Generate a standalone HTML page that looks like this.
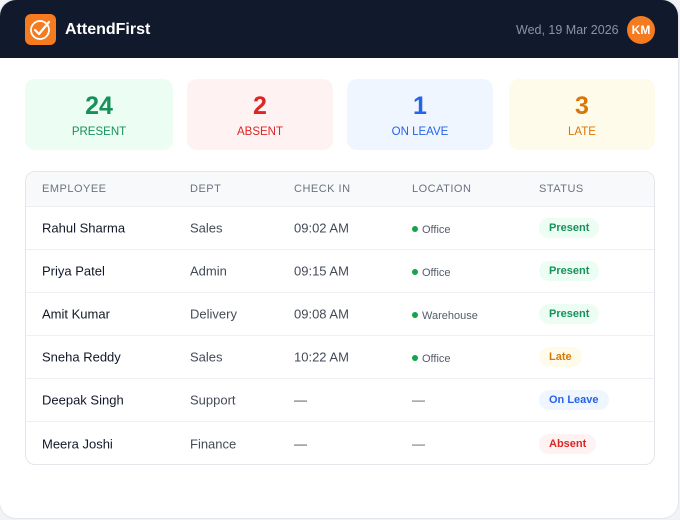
<!DOCTYPE html>
<html><head><style>
*{box-sizing:border-box;margin:0;padding:0}
body{width:680px;height:520px;background:#f1f3f6;font-family:"Liberation Sans",sans-serif;overflow:hidden}
.frame{position:absolute;left:0;top:0;width:678px;height:518px;background:#fff;border-radius:16px;box-shadow:0 0 0 1px #e3e6ea;overflow:hidden}
.hdr{height:58px;background:#111a2c;position:relative}
.logo{position:absolute;left:25px;top:14px;width:31px;height:31px;background:#f47b20;border-radius:6px}
.brand{position:absolute;left:65px;top:21px;color:#fff;font-weight:bold;font-size:16px}
.date{position:absolute;left:516px;top:23px;color:#8b93a3;font-size:12.5px}
.av{position:absolute;left:627px;top:16px;width:28px;height:28px;border-radius:50%;background:#f47b20;color:#fff;font-weight:bold;font-size:12px;text-align:center;line-height:28px}
.card{position:absolute;top:79px;height:71px;border-radius:10px;text-align:center}
.card b{display:block;font-size:25px;margin-top:13px;line-height:28px}
.card span{display:block;font-size:11.5px;margin-top:6px}
.tbl{position:absolute;left:25px;top:171px;width:630px;height:294px;border:1px solid #e3e6ea;border-radius:10px;overflow:hidden}
.th{height:35px;background:#f8f9fb;border-bottom:1px solid #eceef1;position:relative;font-size:11px;color:#6b7280;letter-spacing:.5px}
.row{height:43px;border-bottom:1px solid #eef0f2;position:relative;font-size:13px;color:#444b57}
.row:last-child{border-bottom:none}
.c{position:absolute;top:50%;transform:translateY(-50%);white-space:nowrap}
.th .c{top:17px}
.n{left:16px;color:#111827}
.d{left:164px}.t{left:268px}.l{left:386px;font-size:11px;color:#555c68;margin-top:2px}.s{left:513px}
.dot{display:inline-block;width:6px;height:6px;border-radius:50%;background:#16a34a;margin-right:4px;vertical-align:1px}
.p{padding:4px 10px;border-radius:11px;font-size:11px;font-weight:bold}
</style></head><body><div class="frame">
<div class="hdr">
<div class="logo"><svg width="31" height="31" viewBox="0 0 31 31"><circle cx="15" cy="16" r="9" fill="none" stroke="#fff" stroke-width="1.8"/><path d="M10 16l4 4 10-12" fill="none" stroke="#fff" stroke-width="2.2" stroke-linecap="round" stroke-linejoin="round"/></svg></div>
<div class="brand">AttendFirst</div>
<div class="date">Wed, 19 Mar 2026</div>
<div class="av">KM</div>
</div>
<div class="card" style="left:25px;width:148px;background:#ecfdf3;color:#16915a"><b>24</b><span>PRESENT</span></div>
<div class="card" style="left:187px;width:146px;background:#fef2f2;color:#dc2626"><b>2</b><span>ABSENT</span></div>
<div class="card" style="left:347px;width:146px;background:#eff6ff;color:#2563eb"><b>1</b><span>ON LEAVE</span></div>
<div class="card" style="left:509px;width:146px;background:#fffbeb;color:#d97706"><b>3</b><span>LATE</span></div>
<div class="tbl">
<div class="th"><span class="c n" style="color:#6b7280">EMPLOYEE</span><span class="c d">DEPT</span><span class="c t">CHECK IN</span><span class="c l" style="font-size:11px;color:#6b7280;margin-top:0">LOCATION</span><span class="c s">STATUS</span></div>
<div class="row"><span class="c n">Rahul Sharma</span><span class="c d">Sales</span><span class="c t">09:02 AM</span><span class="c l"><i class="dot"></i>Office</span><span class="c s p" style="background:#ecfdf3;color:#16915a">Present</span></div>
<div class="row"><span class="c n">Priya Patel</span><span class="c d">Admin</span><span class="c t">09:15 AM</span><span class="c l"><i class="dot"></i>Office</span><span class="c s p" style="background:#ecfdf3;color:#16915a">Present</span></div>
<div class="row"><span class="c n">Amit Kumar</span><span class="c d">Delivery</span><span class="c t">09:08 AM</span><span class="c l"><i class="dot"></i>Warehouse</span><span class="c s p" style="background:#ecfdf3;color:#16915a">Present</span></div>
<div class="row"><span class="c n">Sneha Reddy</span><span class="c d">Sales</span><span class="c t">10:22 AM</span><span class="c l"><i class="dot"></i>Office</span><span class="c s p" style="background:#fffbeb;color:#d97706">Late</span></div>
<div class="row"><span class="c n">Deepak Singh</span><span class="c d">Support</span><span class="c t">—</span><span class="c l" style="font-size:13px;margin-top:0">—</span><span class="c s p" style="background:#eff6ff;color:#2563eb">On Leave</span></div>
<div class="row"><span class="c n">Meera Joshi</span><span class="c d">Finance</span><span class="c t">—</span><span class="c l" style="font-size:13px;margin-top:0">—</span><span class="c s p" style="background:#fef2f2;color:#dc2626">Absent</span></div>
</div>
</div></body></html>
